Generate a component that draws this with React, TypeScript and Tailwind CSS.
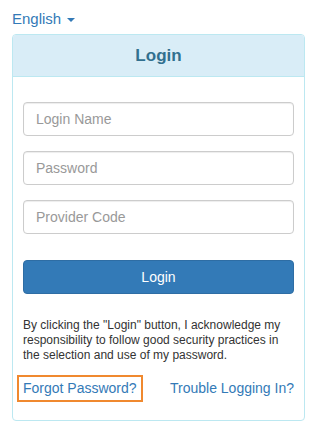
export default function App() {
  return (
    <div className="min-h-[435px] bg-white font-['Liberation_Sans',Arial,sans-serif] text-[#333]">
      <div className="px-3 pt-[9px]">
        <div className="flex h-[20px] items-center text-[15px] text-[#337ab7]">
          English
          <span className="ml-[6px] mt-[1px] inline-block h-0 w-0 border-x-[4px] border-t-[4px] border-x-transparent border-t-[#337ab7]" />
        </div>
        <div className="mt-[5px] w-[293px] rounded-[4px] border border-[#bce8f1]">
          <div className="flex h-[42px] items-center justify-center rounded-t-[3px] border-b border-[#bce8f1] bg-[#d9edf7] text-[17px] font-bold text-[#31708f]">
            Login
          </div>
          <div className="px-[10px] pb-[18px] pt-[25px]">
            <div className="flex flex-col gap-[15px]">
              {["Login Name", "Password", "Provider Code"].map((p) => (
                <input
                  key={p}
                  placeholder={p}
                  type={p === "Password" ? "password" : "text"}
                  className="h-[34px] w-full rounded-[4px] border border-[#ccc] px-3 text-[14px] text-[#555] shadow-[inset_0_1px_1px_rgba(0,0,0,0.075)] outline-none placeholder:text-[#999]"
                />
              ))}
            </div>
            <button className="mt-[26px] h-[34px] w-full rounded-[4px] border border-[#2e6da4] bg-[#337ab7] text-[14px] text-white">
              Login
            </button>
            <p className="mt-[24px] text-[12px] leading-[15px] text-[#333]">
              By clicking the "Login" button, I acknowledge my responsibility to follow good security practices in the selection and use of my password.
            </p>
            <div className="mt-[12px] flex items-center justify-between">
              <span className="-ml-[6px] flex h-[27px] items-center border-2 border-[#f0892f] px-[4px] text-[14px] text-[#337ab7]">
                Forgot Password?
              </span>
              <span className="text-[14px] text-[#337ab7]">Trouble Logging In?</span>
            </div>
          </div>
        </div>
      </div>
    </div>
  );
}
